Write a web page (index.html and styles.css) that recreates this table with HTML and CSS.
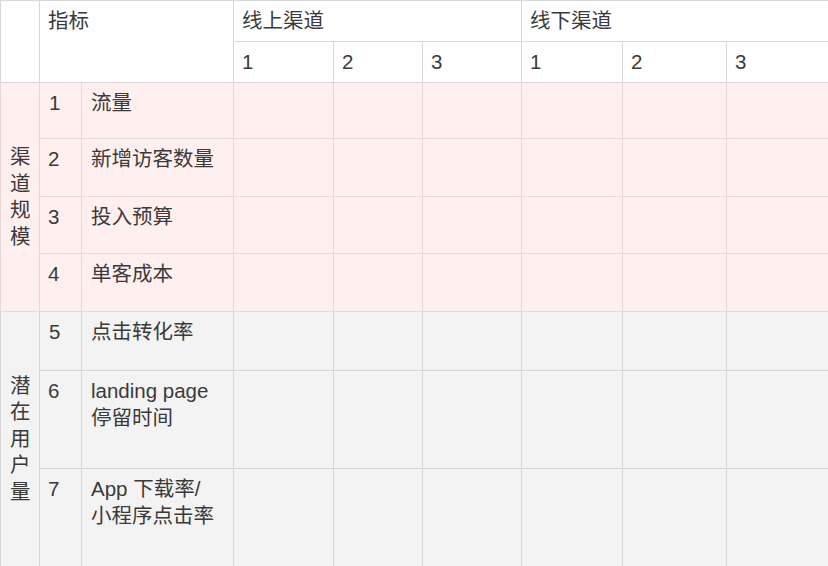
FILE: index.html
```html
<!DOCTYPE html>
<html lang="zh">
<head>
<meta charset="utf-8">
<title>渠道指标</title>
<link rel="stylesheet" href="styles.css">
</head>
<body>
<table class="metrics">
  <colgroup>
    <col class="c-group">
    <col class="c-no">
    <col class="c-name">
    <col class="c-d1">
    <col class="c-d2">
    <col class="c-d3">
    <col class="c-d4">
    <col class="c-d5">
    <col class="c-d6">
  </colgroup>
  <thead>
    <tr class="h1">
      <th rowspan="2"></th>
      <th rowspan="2" colspan="2">指标</th>
      <th colspan="3">线上渠道</th>
      <th colspan="3">线下渠道</th>
    </tr>
    <tr class="h2">
      <th>1</th><th>2</th><th>3</th>
      <th>1</th><th>2</th><th>3</th>
    </tr>
  </thead>
  <tbody class="pink">
    <tr class="r56">
      <td class="group" rowspan="4">渠道规模</td>
      <td>1</td><td>流量</td>
      <td></td><td></td><td></td><td></td><td></td><td></td>
    </tr>
    <tr class="r58">
      <td>2</td><td>新增访客数量</td>
      <td></td><td></td><td></td><td></td><td></td><td></td>
    </tr>
    <tr class="r57">
      <td>3</td><td>投入预算</td>
      <td></td><td></td><td></td><td></td><td></td><td></td>
    </tr>
    <tr class="r58">
      <td>4</td><td>单客成本</td>
      <td></td><td></td><td></td><td></td><td></td><td></td>
    </tr>
  </tbody>
  <tbody class="gray">
    <tr class="r59">
      <td class="group" rowspan="3">潜在用户量</td>
      <td>5</td><td>点击转化率</td>
      <td></td><td></td><td></td><td></td><td></td><td></td>
    </tr>
    <tr class="r98">
      <td>6</td><td>landing page<br>停留时间</td>
      <td></td><td></td><td></td><td></td><td></td><td></td>
    </tr>
    <tr class="r98">
      <td>7</td><td>App 下载率/<br>小程序点击率</td>
      <td></td><td></td><td></td><td></td><td></td><td></td>
    </tr>
  </tbody>
</table>
</body>
</html>
```
FILE: styles.css
```css
html, body {
  margin: 0;
  padding: 0;
  background: #ffffff;
}

.metrics {
  border-collapse: collapse;
  table-layout: fixed;
  width: 828px;
  font-family: "Liberation Sans", "Noto Sans CJK SC", sans-serif;
  font-size: 20.5px;
  line-height: 27px;
  color: #3a3a3a;
}

.c-group { width: 39px; }
.c-no { width: 42px; }
.c-name { width: 152px; }
.c-d1 { width: 100px; }
.c-d2 { width: 89px; }
.c-d3 { width: 99px; }
.c-d4 { width: 101px; }
.c-d5 { width: 104px; }
.c-d6 { width: 102px; }

.metrics th,
.metrics td {
  border: 1px solid #d8d8d8;
  padding: 6px 8px;
  vertical-align: top;
  text-align: left;
  font-weight: normal;
  overflow: hidden;
}

.metrics thead th {
  background: #ffffff;
}

.h1 { height: 41px; }
.h2 { height: 41px; }
.r56 { height: 56px; }
.r57 { height: 57px; }
.r58 { height: 58px; }
.r59 { height: 59px; }
.r98 { height: 98px; }

.pink td {
  background: #fff0ef;
  border-color: #e8d9d9;
}

.gray td {
  background: #f3f3f3;
  border-color: #d6d6d6;
}

.metrics td:nth-child(n) { }

.metrics tbody td.group {
  vertical-align: middle;
  text-align: center;
  padding: 0 9px;
  line-height: 26.5px;
}

.metrics tbody td + td {
  padding-left: 9px;
}
```
